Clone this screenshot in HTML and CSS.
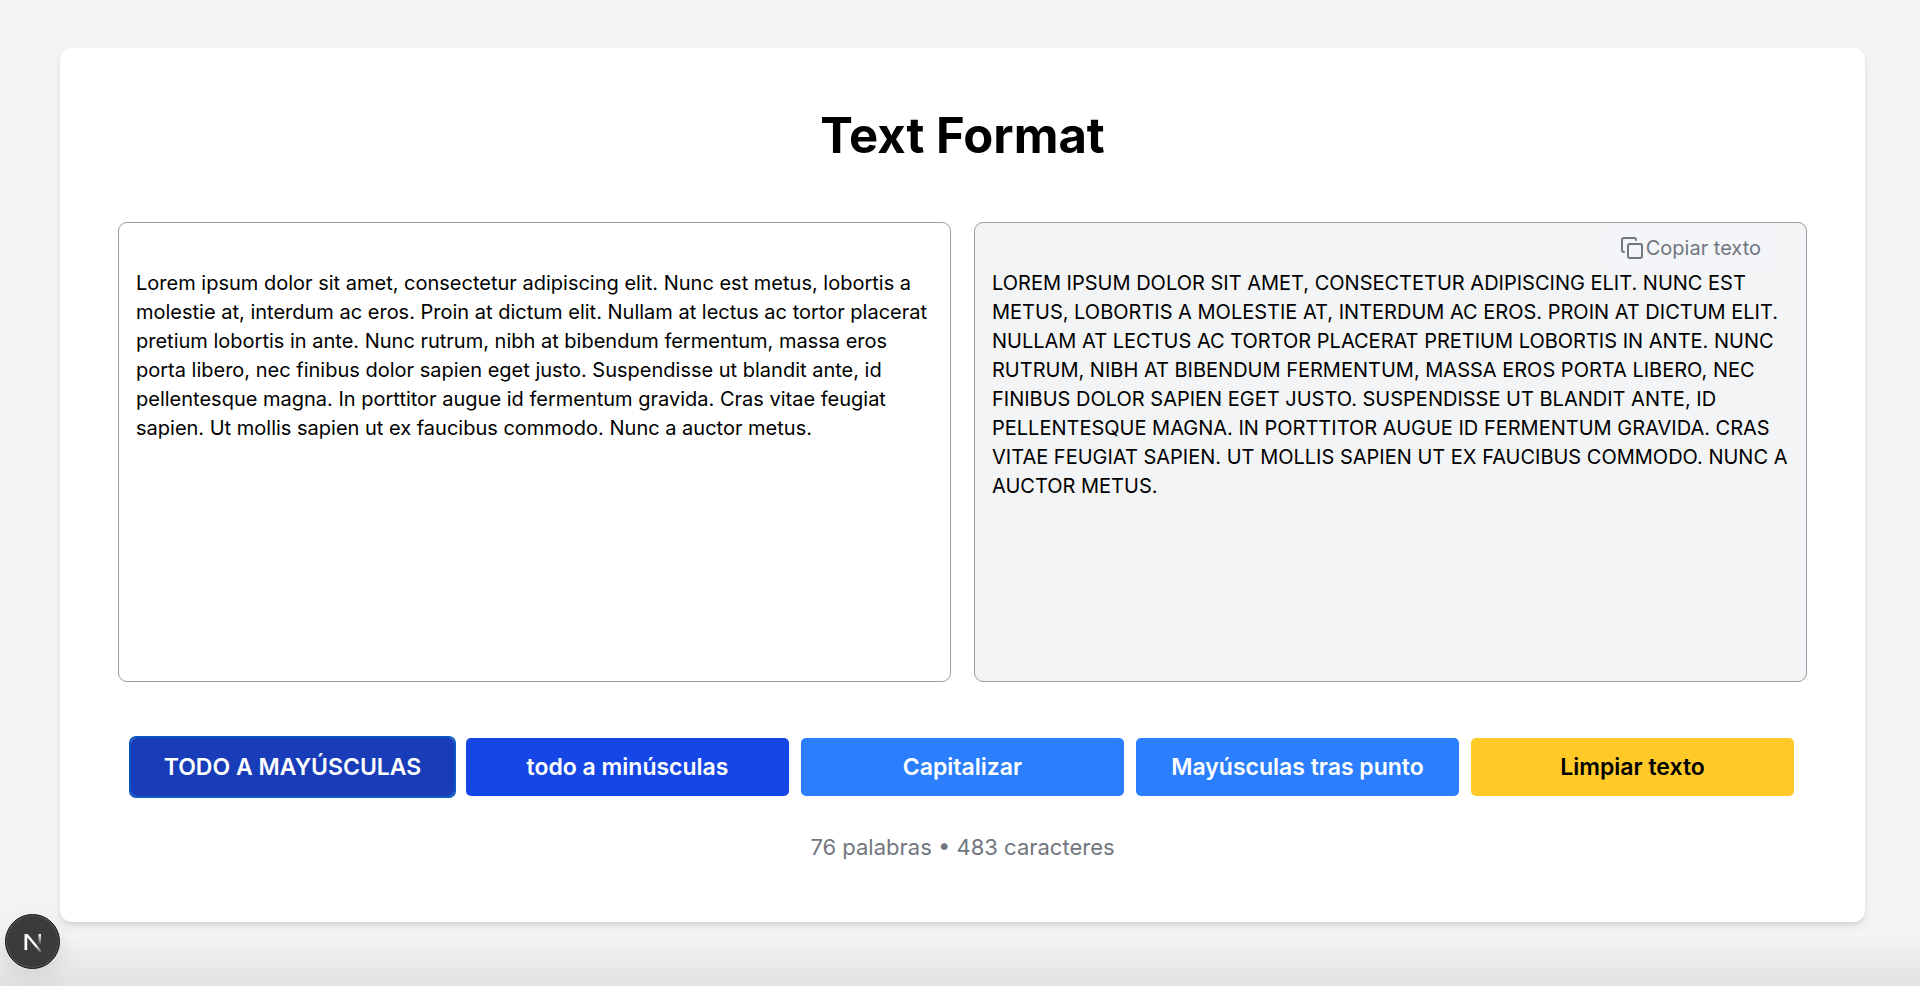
FILE: index.html
```html
<!DOCTYPE html>
<html lang="es">
<head>
<meta charset="utf-8">
<meta name="viewport" content="width=device-width, initial-scale=1">
<title>Text Format</title>
<link rel="stylesheet" href="styles.css">
</head>
<body>
<main class="card">
  <h1 class="title">Text Format</h1>
  <div class="editors">
    <textarea class="box" aria-label="Texto original" spellcheck="false">Lorem ipsum dolor sit amet, consectetur adipiscing elit. Nunc est metus, lobortis a molestie at, interdum ac eros. Proin at dictum elit. Nullam at lectus ac tortor placerat pretium lobortis in ante. Nunc rutrum, nibh at bibendum fermentum, massa eros porta libero, nec finibus dolor sapien eget justo. Suspendisse ut blandit ante, id pellentesque magna. In porttitor augue id fermentum gravida. Cras vitae feugiat sapien. Ut mollis sapien ut ex faucibus commodo. Nunc a auctor metus.</textarea>
    <div class="output">
      <textarea class="box box-result" aria-label="Texto formateado" spellcheck="false" readonly>LOREM IPSUM DOLOR SIT AMET, CONSECTETUR ADIPISCING ELIT. NUNC EST METUS, LOBORTIS A MOLESTIE AT, INTERDUM AC EROS. PROIN AT DICTUM ELIT. NULLAM AT LECTUS AC TORTOR PLACERAT PRETIUM LOBORTIS IN ANTE. NUNC RUTRUM, NIBH AT BIBENDUM FERMENTUM, MASSA EROS PORTA LIBERO, NEC FINIBUS DOLOR SAPIEN EGET JUSTO. SUSPENDISSE UT BLANDIT ANTE, ID PELLENTESQUE MAGNA. IN PORTTITOR AUGUE ID FERMENTUM GRAVIDA. CRAS VITAE FEUGIAT SAPIEN. UT MOLLIS SAPIEN UT EX FAUCIBUS COMMODO. NUNC A AUCTOR METUS.</textarea>
      <button class="copy" type="button">
        <svg class="copy-icon" viewBox="0 0 24 24" fill="none" stroke="currentColor" stroke-width="2" stroke-linecap="round" stroke-linejoin="round" aria-hidden="true"><rect x="8" y="8" width="14" height="14" rx="2"/><path d="M4 16c-1.100 0-2-.9-2-2V4c0-1.100.9-2 2-2h10c1.100 0 2 .9 2 2"/></svg>
        Copiar texto
      </button>
    </div>
  </div>
  <div class="actions">
    <button class="btn btn-upper" type="button">TODO A MAYÚSCULAS</button>
    <button class="btn btn-lower" type="button">todo a minúsculas</button>
    <button class="btn" type="button">Capitalizar</button>
    <button class="btn" type="button">Mayúsculas tras punto</button>
    <button class="btn btn-clear" type="button">Limpiar texto</button>
  </div>
  <p class="count">76 palabras • 483 caracteres</p>
</main>
<div class="fade"></div>
<button class="dev" type="button" aria-label="Next.js">
  <svg class="dev-icon" viewBox="0 0 20 20" fill="none" aria-hidden="true">
    <defs>
      <linearGradient id="stem" x1="0" y1="2" x2="0" y2="13" gradientUnits="userSpaceOnUse"><stop stop-color="#fff"/><stop offset="1" stop-color="#fff" stop-opacity="0"/></linearGradient>
      <linearGradient id="diag" x1="13" y1="13" x2="18" y2="20" gradientUnits="userSpaceOnUse"><stop stop-color="#fff"/><stop offset="1" stop-color="#fff" stop-opacity=".2"/></linearGradient>
    </defs>
    <path d="M15.500 2h2.500v13h-2.500z" fill="url(#stem)"/>
    <path d="M1.500 18V2h3.200L18.500 18.800l-1.500 1.700L4.200 5.200V18z" fill="url(#diag)"/>
  </svg>
</button>
</body>
</html>
```
FILE: styles.css
```css
* {
  box-sizing: border-box;
}

body {
  margin: 0;
  min-height: 100vh;
  padding: 48px 55px 48px 60px;
  background: #f3f4f6;
  color: #000;
  font-family: Inter, "Liberation Sans", sans-serif;
}

button,
textarea {
  font-family: inherit;
}

.card {
  padding: 58px;
  border-radius: 12px;
  background: #fff;
  box-shadow: 0 5px 8px -1px rgba(0, 0, 0, 0.1), 0 2px 5px -2px rgba(0, 0, 0, 0.1);
}

.title {
  margin: 0 0 56px;
  font-size: 49px;
  line-height: 60px;
  font-weight: 700;
  text-align: center;
}

.editors {
  display: grid;
  grid-template-columns: 1fr 1fr;
  gap: 23px;
}

.output {
  position: relative;
  display: grid;
}

.box {
  display: block;
  width: 100%;
  height: 460px;
  padding: 46px 17px 17px;
  border: 1px solid #999ca3;
  border-radius: 9px;
  background: #fff;
  color: #000;
  font-size: 20px;
  line-height: 29px;
  resize: none;
}

.box-result {
  background: #f3f4f6;
}

.copy {
  position: absolute;
  top: 6px;
  right: 30px;
  display: flex;
  align-items: center;
  gap: 2px;
  padding: 6px 16px;
  border: 0;
  border-radius: 5px;
  background: #f4f5f8;
  color: #72767f;
  font-size: 20px;
  line-height: 28px;
}

.copy-icon {
  width: 24px;
  height: 24px;
}

.actions {
  display: grid;
  grid-template-columns: repeat(5, 1fr);
  gap: 12px;
  margin: 56px 13px 0;
}

.btn {
  padding: 14px 8px;
  border: 0;
  border-radius: 5px;
  background: #2b7fff;
  color: #fff;
  font-size: 23px;
  line-height: 30px;
  font-weight: 600;
}

.btn-upper {
  background: #193cb8;
  outline: 2px solid #0a58c4;
}

.btn-lower {
  background: #1447e6;
}

.btn-clear {
  background: #ffc928;
  color: #000;
}

.count {
  margin: 34px 0 0;
  color: #72767f;
  font-size: 22px;
  line-height: 34px;
  text-align: center;
}

.fade {
  position: fixed;
  inset: auto 0 0;
  height: 50px;
  background: linear-gradient(rgba(0, 0, 0, 0), rgba(0, 0, 0, 0.07));
  pointer-events: none;
}

.dev {
  position: fixed;
  left: 5px;
  bottom: 17px;
  display: grid;
  place-items: center;
  width: 55px;
  height: 55px;
  padding: 0;
  border: 1px solid #141414;
  border-radius: 50%;
  background: #3b3b3b;
  box-shadow: inset 0 0 0 1px #555, 0 8px 24px rgba(0, 0, 0, 0.1);
}

.dev-icon {
  width: 20px;
  height: 20px;
  overflow: visible;
}
```
